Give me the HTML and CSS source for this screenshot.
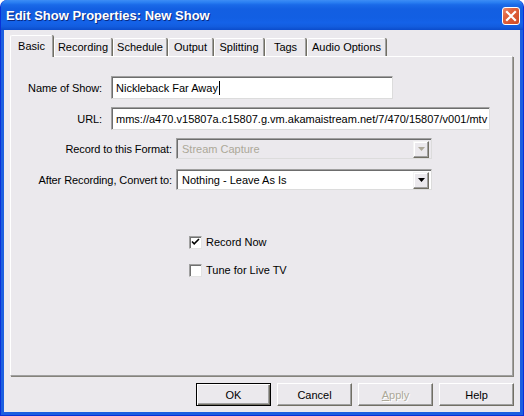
FILE: index.html
```html
<!DOCTYPE html>
<html>
<head>
<meta charset="utf-8">
<title>Edit Show Properties</title>
<link rel="stylesheet" href="styles.css">
</head>
<body>
<div class="window">
  <div class="titlebar">
    <span class="title">Edit Show Properties: New Show</span>
    <div class="close">
      <svg width="18" height="18" viewBox="0 0 18 18"><path d="M5 5 L13 13 M13 5 L5 13" stroke="#fff" stroke-width="2.2" stroke-linecap="square"/></svg>
    </div>
  </div>
  <div class="client">
    <div class="tabs">
      <div class="tab active t-basic">Basic</div>
      <div class="tab t-recording">Recording</div>
      <div class="tab t-schedule">Schedule</div>
      <div class="tab t-output">Output</div>
      <div class="tab t-splitting">Splitting</div>
      <div class="tab t-tags">Tags</div>
      <div class="tab t-audio">Audio Options</div>
    </div>
    <div class="panel">
      <div class="row r-name">
        <span class="lbl lbl-short">Name of Show:</span>
        <div class="edit edit-name">Nickleback Far Away<span class="caret"></span></div>
      </div>
      <div class="row r-url">
        <span class="lbl lbl-short">URL:</span>
        <div class="edit edit-url">mms://a470.v15807a.c15807.g.vm.akamaistream.net/7/470/15807/v001/mtv</div>
      </div>
      <div class="row r-format">
        <span class="lbl lbl-long">Record to this Format:</span>
        <div class="combo disabled">
          <span class="combo-text">Stream Capture</span>
          <span class="drop"><svg width="7" height="4" viewBox="0 0 7 4"><path d="M0 0 H7 L3.5 4 Z" fill="#aca899"/></svg></span>
        </div>
      </div>
      <div class="row r-convert">
        <span class="lbl lbl-long">After Recording, Convert to:</span>
        <div class="combo">
          <span class="combo-text">Nothing - Leave As Is</span>
          <span class="drop"><svg width="7" height="4" viewBox="0 0 7 4"><path d="M0 0 H7 L3.5 4 Z" fill="#000"/></svg></span>
        </div>
      </div>
      <div class="check c-first">
        <span class="box"><svg width="11" height="11" viewBox="0 0 11 11"><path d="M2 4.5 L4.2 6.8 L9 2" stroke="#000" stroke-width="1.6" fill="none"/></svg></span>
        <span>Record Now</span>
      </div>
      <div class="check c-second">
        <span class="box"></span>
        <span>Tune for Live TV</span>
      </div>
    </div>
    <div class="buttons">
      <div class="btn default">OK</div>
      <div class="btn">Cancel</div>
      <div class="btn disabled"><span class="ul">A</span>pply</div>
      <div class="btn">Help</div>
    </div>
  </div>
</div>
</body>
</html>
```

FILE: styles.css
```css
html, body {
  margin: 0;
  padding: 0;
  background: #ffffff;
}

body {
  font-family: "Liberation Sans", Arial, sans-serif;
  font-size: 11px;
  color: #000;
}

.window {
  width: 524px;
  height: 416px;
  box-sizing: border-box;
  display: flex;
  flex-direction: column;
  background: #1c5fe0;
  border: 1px solid #0831d9;
  border-top: none;
  border-radius: 7px 7px 0 0;
  overflow: hidden;
}

.titlebar {
  height: 30px;
  flex: none;
  display: flex;
  align-items: center;
  justify-content: space-between;
  padding: 0 3px 0 6px;
  margin: 0 -1px;
  background: linear-gradient(to bottom,
    #3d8df5 0%, #2a7ff2 8%, #1a6ae8 16%, #135fe2 30%,
    #125fe3 60%, #1462e8 75%, #135ddf 88%, #0b4ccb 100%);
  border-radius: 7px 7px 0 0;
}

.title {
  color: #fff;
  font-family: "Liberation Sans", Arial, sans-serif;
  font-weight: bold;
  font-size: 13px;
  text-shadow: 1px 1px 0 #0a2a80;
  margin-top: 1px;
}

.close {
  width: 18px;
  height: 18px;
  box-sizing: border-box;
  margin-top: 1px;
  margin-right: 1px;
  border: 1px solid #fff;
  border-radius: 3px;
  background: linear-gradient(to bottom right, #ec8a6c 0%, #e0623e 35%, #cf4a24 100%);
  display: flex;
  align-items: center;
  justify-content: center;
}

.close svg {
  display: block;
  margin: -1px;
}

.client {
  flex: 1;
  margin: 0 3px 3px 3px;
  background: #ebe9ed;
  padding: 5px 6px 0 6px;
  display: flex;
  flex-direction: column;
}

.tabs {
  height: 21px;
  display: flex;
  align-items: flex-end;
  position: relative;
  z-index: 2;
}

.tab {
  height: 18px;
  box-sizing: border-box;
  padding-top: 2px;
  margin-right: 1px;
  text-align: center;
  border-top: 1px solid #fff;
  border-left: 1px solid #fff;
  border-right: 1px solid #a0a0a0;
  box-shadow: 1px 0 0 #716f64;
  border-radius: 2px 2px 0 0;
  background: #ebe9ed;
  white-space: nowrap;
}

.tab.active {
  height: 22px;
  margin-bottom: -1px;
  padding-top: 4px;
}

.t-basic { width: 43px; }
.t-recording { width: 58px; }
.t-schedule { width: 54px; }
.t-output { width: 45px; }
.t-splitting { width: 50px; }
.t-tags { width: 41px; }
.t-audio { width: 79px; }

.panel {
  height: 320px;
  box-sizing: border-box;
  flex: none;
  border-top: 1px solid #fff;
  border-left: 1px solid #fff;
  border-right: 1px solid #a0a0a0;
  border-bottom: 1px solid #a0a0a0;
  box-shadow: 1px 1px 0 #85837b;
  margin-right: 1px;
  padding-top: 19px;
  display: flex;
  flex-direction: column;
}

.row {
  display: flex;
  align-items: center;
}

.lbl {
  flex: none;
  text-align: right;
  white-space: nowrap;
  letter-spacing: -0.1px;
}

.lbl-short {
  width: 91px;
  margin-right: 9px;
}

.lbl-long {
  width: 161px;
  margin-right: 4px;
}

.r-url { margin-top: 8px; }
.r-format { margin-top: 8px; }
.r-convert { margin-top: 10px; }

.edit {
  height: 23px;
  box-sizing: border-box;
  background: #fff;
  border-top: 1px solid #a0a0a0;
  border-left: 1px solid #a0a0a0;
  border-right: 1px solid #dcdcdc;
  border-bottom: 1px solid #dcdcdc;
  box-shadow: inset 1px 1px 0 #6d6d6d;
  padding: 0 4px;
  display: flex;
  align-items: center;
  white-space: nowrap;
  overflow: hidden;
}

.edit-name { width: 282px; }
.edit-url { width: 379px; }

.caret {
  display: inline-block;
  width: 1px;
  height: 14px;
  background: #000;
  margin-left: 1px;
}

.combo {
  width: 256px;
  height: 21px;
  box-sizing: border-box;
  background: #fff;
  border-top: 1px solid #a0a0a0;
  border-left: 1px solid #a0a0a0;
  border-right: 1px solid #dcdcdc;
  border-bottom: 1px solid #dcdcdc;
  box-shadow: inset 1px 1px 0 #6d6d6d;
  display: flex;
  align-items: center;
  padding: 2px 2px 1px 2px;
}

.combo.disabled {
  background: #ebe9ed;
  color: #aca899;
}

.combo-text {
  flex: 1;
  padding-left: 3px;
}

.drop {
  width: 16px;
  height: 17px;
  box-sizing: border-box;
  background: #ebe9ed;
  border-top: 1px solid #f4f4f4;
  border-left: 1px solid #f4f4f4;
  border-right: 1px solid #716f64;
  border-bottom: 1px solid #716f64;
  box-shadow: inset -1px -1px 0 #a0a0a0, inset 1px 1px 0 #fff;
  display: flex;
  align-items: center;
  justify-content: center;
}

.check {
  display: flex;
  align-items: center;
  margin-left: 178px;
  height: 14px;
}

.c-first { margin-top: 45px; }
.c-second { margin-top: 14px; }

.box {
  width: 13px;
  height: 13px;
  box-sizing: border-box;
  background: #fff;
  border-top: 1px solid #a0a0a0;
  border-left: 1px solid #a0a0a0;
  border-right: 1px solid #e3e3e3;
  border-bottom: 1px solid #e3e3e3;
  box-shadow: inset 1px 1px 0 #707070;
  margin-right: 4px;
  display: flex;
  align-items: center;
  justify-content: center;
}

.buttons {
  display: flex;
  justify-content: flex-end;
  gap: 6px;
  margin-top: 7px;
}

.btn {
  width: 75px;
  height: 23px;
  box-sizing: border-box;
  background: #ebe9ed;
  border-top: 1px solid #fff;
  border-left: 1px solid #fff;
  border-right: 1px solid #716f64;
  border-bottom: 1px solid #716f64;
  box-shadow: inset -1px -1px 0 #a0a0a0;
  display: flex;
  align-items: center;
  justify-content: center;
}

.btn.default {
  border: 1px solid #000;
  box-shadow: inset 1px 1px 0 #fff, inset -1px -1px 0 #716f64, inset -2px -2px 0 #a0a0a0;
}

.btn.disabled {
  color: #aca899;
  text-shadow: 1px 1px 0 #fff;
}

.ul {
  text-decoration: underline;
}
```
